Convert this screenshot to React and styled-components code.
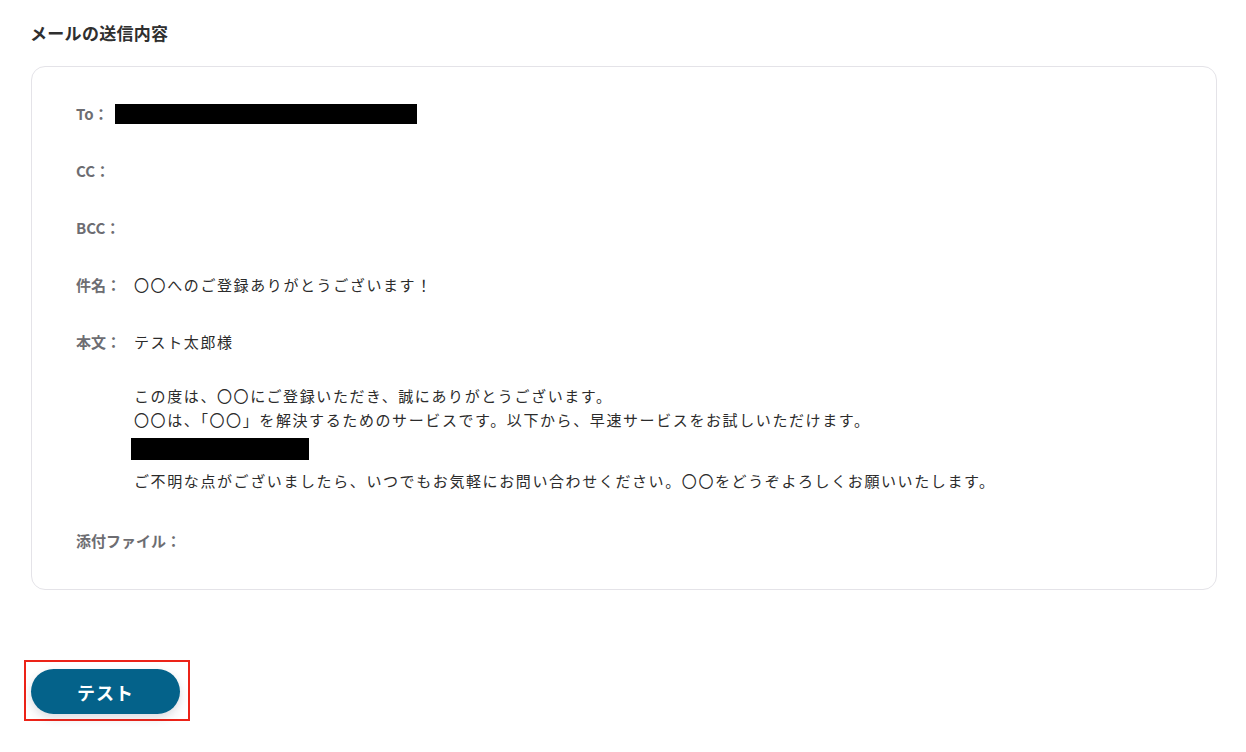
import React from "react";
import styled, { createGlobalStyle } from "styled-components";

const Global = createGlobalStyle`
  html, body { margin: 0; padding: 0; background: #ffffff; }
  body {
    font-family: "Noto Sans CJK JP", "Noto Sans", sans-serif;
    color: #333333;
  }
`;

const Page = styled.div`
  width: 1246px;
  height: 752px;
  box-sizing: border-box;
  padding: 21px 29px 0 30px;
  display: flex;
  flex-direction: column;
`;

const Title = styled.h2`
  margin: 0;
  font-size: 17px;
  line-height: 24px;
  font-weight: 700;
  letter-spacing: 0.3px;
  color: #2f2f2f;
`;

const Card = styled.div`
  margin-top: 21px;
  margin-left: 1px;
  border: 1px solid #e4e3e8;
  border-radius: 14px;
  padding: 35px 44px 36px 44px;
  display: flex;
  flex-direction: column;
  gap: 33px;
`;

const Row = styled.div`
  display: flex;
  align-items: flex-start;
  line-height: 24px;
  margin-top: ${(p) => p.$mt || 0}px;
`;

const Label = styled.span`
  font-size: 15px;
  font-weight: 700;
  color: #6d6d72;
  white-space: nowrap;
`;

const Value = styled.div`
  margin-left: ${(p) => p.$gap || 13}px;
  font-size: 15px;
  letter-spacing: 1.6px;
  color: #2b2b2b;
  display: flex;
  flex-direction: column;
`;

const Line = styled.div`
  line-height: 24px;
  margin-top: ${(p) => p.$mt || 0}px;
  white-space: nowrap;
`;

const Redact = styled.div`
  background: #000;
  width: ${(p) => p.$w}px;
  height: ${(p) => p.$h}px;
  margin: ${(p) => p.$m || "0"};
`;

const ButtonArea = styled.div`
  margin-top: 70px;
  margin-left: -6px;
  align-self: flex-start;
  border: 2px solid #ec2318;
  padding: 7px 8px 5px 5px;
`;

const TestButton = styled.button`
  width: 149px;
  height: 45px;
  border: none;
  border-radius: 23px;
  background: #04628a;
  color: #ffffff;
  font-family: "Noto Sans CJK JP", sans-serif;
  font-size: 18px;
  font-weight: 700;
  letter-spacing: 1px;
  box-shadow: 0 4px 10px rgba(60, 60, 90, 0.18);
  cursor: pointer;
  display: block;
`;

export default function App() {
  return (
    <>
      <Global />
      <Page>
        <Title>メールの送信内容</Title>
        <Card>
          <Row>
            <Label>To：</Label>
            <Value $gap={6}>
              <Redact $w={302} $h={20} $m="2px 0 0 0" />
            </Value>
          </Row>
          <Row>
            <Label>CC：</Label>
          </Row>
          <Row>
            <Label>BCC：</Label>
          </Row>
          <Row>
            <Label>件名：</Label>
            <Value>
              <Line>〇〇へのご登録ありがとうございます！</Line>
            </Value>
          </Row>
          <Row>
            <Label>本文：</Label>
            <Value>
              <Line>テスト太郎様</Line>
              <Line $mt={30}>この度は、〇〇にご登録いただき、誠にありがとうございます。</Line>
              <Line>〇〇は、「〇〇」を解決するためのサービスです。以下から、早速サービスをお試しいただけます。</Line>
              <Redact $w={178} $h={22} $m="6px 0 9px -3px" />
              <Line>ご不明な点がございましたら、いつでもお気軽にお問い合わせください。〇〇をどうぞよろしくお願いいたします。</Line>
            </Value>
          </Row>
          <Row $mt={3}>
            <Label>添付ファイル：</Label>
          </Row>
        </Card>
        <ButtonArea>
          <TestButton>テスト</TestButton>
        </ButtonArea>
      </Page>
    </>
  );
}
